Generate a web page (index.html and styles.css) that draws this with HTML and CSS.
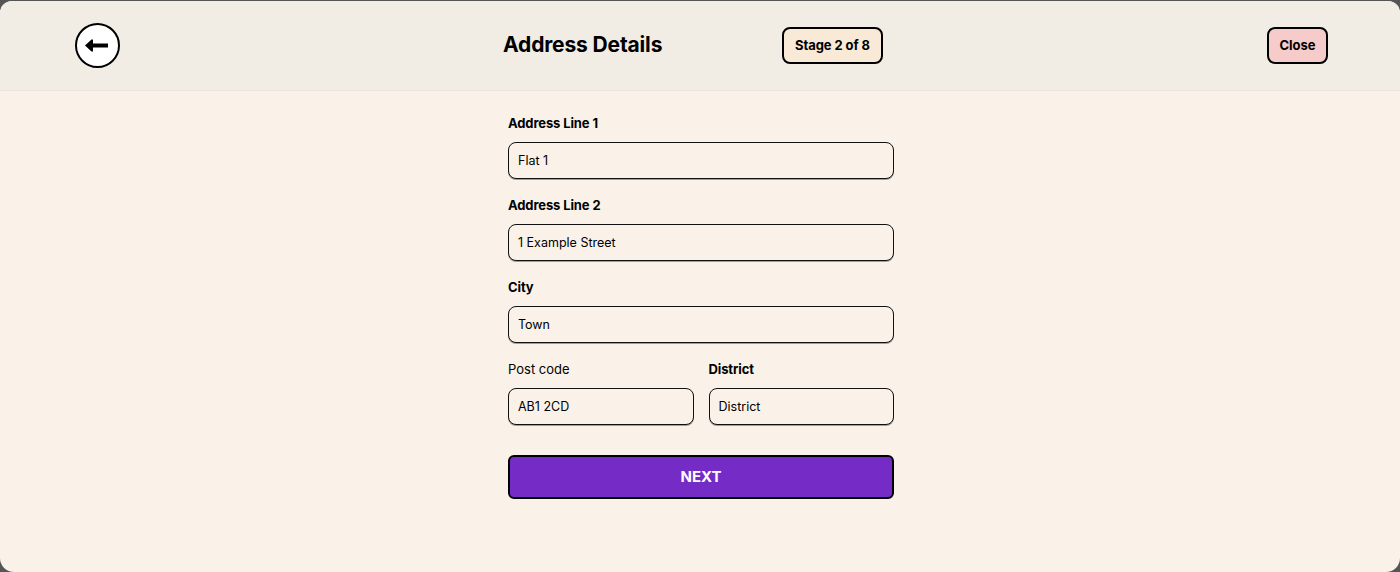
FILE: index.html
```html
<!DOCTYPE html>
<html lang="en">
<head>
  <meta charset="UTF-8" />
  <meta name="viewport" content="width=device-width, initial-scale=1.0"/>
  <title>Address Details</title>
  <link rel="stylesheet" href="styles.css">
</head>
<body>
  <div class="window">
    <header class="top-bar">
      <button class="back-button" aria-label="Back">
        <svg width="23" height="13" viewBox="0 0 23 13">
          <path d="M23 4.5H8V0.5H6.5L0 6.5L6.5 12.5H8V8.5H23Z" fill="#000"/>
        </svg>
      </button>
      <h1>Address Details</h1>
      <div class="stage">Stage 2 of 8</div>
      <button class="close-button">Close</button>
    </header>

    <form class="address-form">
      <div class="field">
        <label class="bold">Address Line 1</label>
        <input type="text" value="Flat 1">
      </div>
      <div class="field">
        <label class="bold">Address Line 2</label>
        <input type="text" value="1 Example Street">
      </div>
      <div class="field">
        <label class="bold">City</label>
        <input type="text" value="Town">
      </div>
      <div class="field-row">
        <div class="field">
          <label>Post code</label>
          <input type="text" value="AB1 2CD">
        </div>
        <div class="field">
          <label class="bold">District</label>
          <input type="text" value="District">
        </div>
      </div>
      <button type="button" class="next-button">NEXT</button>
    </form>
  </div>
</body>
</html>
```

FILE: styles.css
```css
* {
  box-sizing: border-box;
}

body {
  margin: 0;
  height: 572px;
  overflow: hidden;
  background-color: #555;
  font-family: 'Inter', 'Liberation Sans', sans-serif;
  color: #000;
}

.window {
  height: 571px;
  margin-top: 1px;
  background-color: #faf2e8;
  border-radius: 12px 12px 14px 14px;
  overflow: hidden;
}

.top-bar {
  display: flex;
  align-items: center;
  height: 90px;
  padding: 0 72px 0 75px;
  background-color: #f1ede5;
  border-bottom: 1px solid #e9e6df;
}

.back-button {
  display: flex;
  align-items: center;
  justify-content: center;
  width: 45px;
  height: 45px;
  padding: 0 2px 0 0;
  background-color: #fff;
  border: 2px solid #000;
  border-radius: 50%;
}

h1 {
  margin: 0 0 2px 383px;
  width: 159px;
  font-size: 21px;
  font-weight: 700;
  letter-spacing: -0.15px;
  white-space: nowrap;
}

.stage {
  margin-left: 120px;
  padding: 0 11px;
  height: 37px;
  line-height: 32px;
  font-size: 13px;
  font-weight: 700;
  letter-spacing: -0.08px;
  background-color: #f8ead6;
  border: 2px solid #000;
  border-radius: 8px;
}

.close-button {
  margin-left: auto;
  width: 61px;
  height: 37px;
  padding: 0 0 1px;
  font-family: inherit;
  font-size: 13px;
  font-weight: 700;
  color: #000;
  background-color: #f6cccb;
  border: 2px solid #000;
  border-radius: 8px;
}

.address-form {
  width: 386px;
  margin: 24px 0 0 508px;
  display: flex;
  flex-direction: column;
  gap: 18px;
}

.field {
  display: flex;
  flex-direction: column;
  gap: 10px;
  flex: 1;
  min-width: 0;
}

.field label {
  font-size: 13px;
  line-height: 17px;
  font-weight: 400;
}

.field label.bold {
  font-weight: 700;
  letter-spacing: -0.12px;
}

.field input {
  width: 100%;
  height: 37px;
  padding: 0 9px 1px;
  font-family: inherit;
  font-size: 12.5px;
  color: #000;
  background-color: #faf2e8;
  border: 1px solid #111;
  border-radius: 8px;
  box-shadow: 0 1px 0 rgba(0, 0, 0, 0.35);
}

.field-row {
  display: flex;
  gap: 15px;
}

.next-button {
  height: 44px;
  margin-top: 12px;
  padding: 0 0 1px;
  font-family: inherit;
  font-size: 15px;
  font-weight: 700;
  color: #fff;
  background-color: #752cc7;
  border: 2px solid #000;
  border-radius: 6px;
}
```
